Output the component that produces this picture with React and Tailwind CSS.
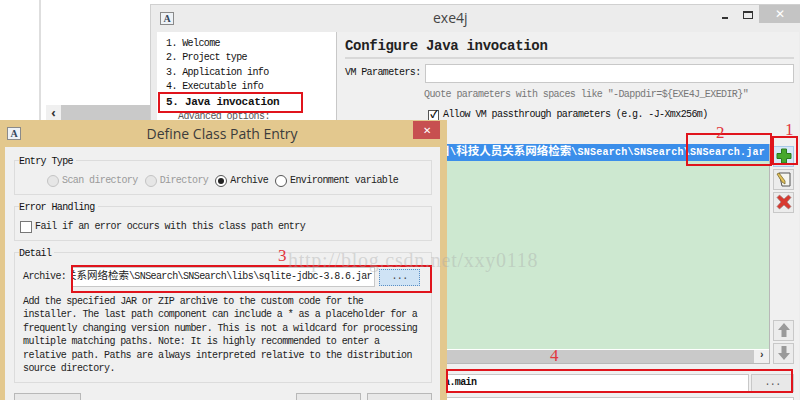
const mono = "font-['Liberation_Mono','Noto_Sans_CJK_SC',monospace]";
const ui = "font-['Open_Sans','Liberation_Sans',sans-serif]";

function AppIcon({ className }) {
  return (
    <div className={`flex items-center justify-center w-[14px] h-[13px] bg-[#eef2f6] border border-[#8a8a8a] text-[10px] leading-none font-bold text-[#34465c] font-['Liberation_Serif',serif] ${className}`}>
      A
    </div>
  );
}

function Radio({ label, checked, disabled }) {
  return (
    <div className={`flex items-center gap-[3px] ${disabled ? "text-[#9a9a9a]" : "text-[#222]"}`}>
      <div className={`flex items-center justify-center w-[12px] h-[12px] rounded-full border ${disabled ? "border-[#c4c4c4] bg-[#e6e6e6]" : "border-[#555] bg-white"}`}>
        {checked && <div className="w-[6px] h-[6px] rounded-full bg-[#222]" />}
      </div>
      <span>{label}</span>
    </div>
  );
}

function Group({ title, className, children }) {
  return (
    <div className={`relative border border-[#dcdcdc] ${className}`}>
      <span className="absolute left-[4px] top-[-5px] bg-[#f0f0f0] pr-[3px] leading-[12px] text-[#111]">{title}</span>
      {children}
    </div>
  );
}

function ToolButton({ children, active, className = "" }) {
  return (
    <div className={`flex items-center justify-center w-[21px] h-[21px] border ${active ? "border-[#a9c9e8] bg-[#d5e8f8]" : "border-[#c8c8c8] bg-[#ececec]"} ${className}`}>
      {children}
    </div>
  );
}

function PlusIcon() {
  return (
    <svg width="16" height="16" viewBox="0 0 16 16">
      <path d="M5.5 1h5v4.500H15v5h-4.500V15h-5v-4.500H1v-5h4.500z" fill="#46a82c" stroke="#2a7a1c" strokeWidth="1" />
    </svg>
  );
}

function EditIcon() {
  return (
    <svg width="17" height="17" viewBox="0 0 17 17">
      <path d="M4 2h11v13H7z" fill="#f6f6f0" stroke="#555" strokeWidth="1" />
      <path d="M2 3l2-1 6 8 0 3-3-2z" fill="#e3c25a" stroke="#7a6a30" strokeWidth="0.8" />
    </svg>
  );
}

function DeleteIcon() {
  return (
    <svg width="16" height="16" viewBox="0 0 16 16">
      <path d="M3.5 1L8 5 12.5 1 15 3.500 11 8l4 4.500-2.500 2.500L8 11l-4.500 4L1 12.500 5 8 1 3.500z" fill="#d8392f" stroke="#9a8080" strokeWidth="0.7" />
    </svg>
  );
}

function ArrowIcon({ down }) {
  return (
    <svg width="14" height="16" viewBox="0 0 14 16" className={down ? "rotate-180" : ""}>
      <path d="M7 1l6 7H9.500v7h-5V8H1z" fill="#9a9a9a" />
    </svg>
  );
}

function RedBox({ className }) {
  return <div className={`absolute border-2 border-[#e0141c] ${className}`} />;
}

function Mark({ className, children }) {
  return <span className={`absolute text-[#e2373c] text-[17px] leading-none font-['Liberation_Serif',serif] ${className}`}>{children}</span>;
}

function BackWindow() {
  const steps = ["1. Welcome", "2. Project type", "3. Application info", "4. Executable info"];
  return (
    <div className="absolute left-[150px] top-[4px] w-[650px] h-[396px] flex flex-col bg-[#ececec] border-l border-t border-[#d0d0d0]">
      <div className="relative flex items-center h-[27px] shrink-0">
        <AppIcon className="ml-[9px]" />
        <span className={`absolute left-[282px] top-[3px] text-[14px] leading-[20px] text-[#444] ${ui}`}>exe4j</span>
        <div className="ml-auto flex items-start self-start">
          <div className="w-[6px] h-[2px] bg-[#333] mt-[12px] mr-[15px]" />
          <div className="w-[10px] h-[8px] border border-[#333] border-t-2 mt-[6px] mr-[6px]" />
          <div className="flex items-center justify-center w-[41px] h-[18px] bg-[#c4c4c4] text-white text-[12px] leading-none">✕</div>
        </div>
      </div>
      <div className={`flex flex-1 bg-[#f0f0f0] ml-[6px] mr-[1px] text-[10px] leading-[14.4px] tracking-[-0.6px] text-[#111] ${mono}`}>
        <div className="w-[180px] h-[89px] shrink-0 bg-white pl-[9px] pt-[5px] border-r border-[#c8c8c8] overflow-hidden">
          {steps.map((s) => (
            <div key={s} className="whitespace-pre">{s}</div>
          ))}
          <div className="font-bold whitespace-pre text-[11px] tracking-[-0.3px]">5. Java invocation</div>
          <div className="pl-[12px] text-[#555] mt-[1px]">Advanced options:</div>
        </div>
        <div className="flex-1 flex flex-col pl-[8px] pr-[5px]">
          <div className="text-[14px] leading-[16px] font-bold tracking-[-0.3px] mt-[6px] pb-[3px] border-b-2 border-[#d8d8d8] text-[#222]">Configure Java invocation</div>
          <div className="flex items-center mt-[5px] h-[19px]">
            <span className="w-[80px] shrink-0 whitespace-nowrap">VM Parameters:</span>
            <div className="flex-1 h-[19px] bg-white border border-[#c8c8c8]" />
          </div>
          <div className="pl-[79px] mt-[5px] text-[#777] whitespace-nowrap">Quote parameters with spaces like "-Dappdir=${"{"}EXE4J_EXEDIR{"}"}"</div>
          <div className="flex items-center gap-[4px] pl-[83px] mt-[6px]">
            <div className="flex items-center justify-center w-[11px] h-[11px] bg-white border border-[#555] text-[10px] leading-none font-bold text-black">✓</div>
            <span className="whitespace-nowrap">Allow VM passthrough parameters (e.g. -J-Xmx256m)</span>
          </div>
          <div className="flex gap-[3px] mt-[21px] h-[220px] ml-[90px]">
            <div className="flex-1 min-w-0 flex flex-col border-r border-b border-[#b8b8b8] bg-[#cde8d0]">
              <div className="flex justify-end items-center h-[17px] overflow-hidden whitespace-nowrap bg-[#3b8eea] text-white font-bold pr-[4px] tracking-[0.25px]">
                <span className="shrink-0"><span className="text-[11.5px] tracking-normal">目</span>\<span className="text-[11.5px] tracking-normal">科技人员关系网络检索</span>\SNSearch\SNSearch\SNSearch.jar</span>
              </div>
              <div className="flex-1" />
              <div className="flex h-[14px] bg-[#c9c9c9] border-t border-white justify-end">
                <div className="flex items-center justify-center w-[15px] bg-[#f0f0f0] text-[10px] font-bold text-[#333]">›</div>
              </div>
            </div>
            <div className="flex flex-col w-[21px] gap-[2px] pt-[2px]">
              <ToolButton active><PlusIcon /></ToolButton>
              <ToolButton><EditIcon /></ToolButton>
              <ToolButton><DeleteIcon /></ToolButton>
              <div className="flex-1" />
              <ToolButton><ArrowIcon /></ToolButton>
              <ToolButton><ArrowIcon down /></ToolButton>
            </div>
          </div>
          <div className="flex gap-[2px] mt-[10px] h-[18px] ml-[90px]">
            <div className="flex-1 bg-white border border-[#c8c8c8] font-bold flex items-center pl-[8px]">a.main</div>
            <div className="flex items-center justify-center w-[43px] bg-[#e8e8e8] border border-[#c8c8c8] text-[#555]">...</div>
          </div>
          <div className="mt-[5px] ml-[90px] h-[10px] bg-white border border-[#c8c8c8]" />
        </div>
      </div>
    </div>
  );
}

function ClassPathDialog() {
  const description = [
    "Add the specified JAR or ZIP archive to the custom code for the",
    "installer. The last path component can include a * as a placeholder for a",
    "frequently changing version number. This is not a wildcard for processing",
    "multiple matching paths. Note: It is highly recommended to enter a",
    "relative path. Paths are always interpreted relative to the distribution",
    "source directory.",
  ];
  return (
    <div className="absolute left-0 top-[120px] w-[447px] h-[280px] flex flex-col bg-[#e3c88e]">
      <div className="relative flex items-center justify-center h-[27px] shrink-0 pr-[3px]">
        <AppIcon className="absolute left-[7px] top-[7px]" />
        <span className={`text-[14px] text-[#3c3c3c] ${ui}`}>Define Class Path Entry</span>
        <div className="absolute left-[413px] top-[1px] flex items-center justify-center w-[27px] h-[18px] bg-[#c75050] text-white text-[10px] leading-none">✕</div>
      </div>
      <div className={`flex-1 flex flex-col ml-[5px] mr-[7px] bg-[#f0f0f0] pl-[9px] pr-[8px] pt-[13px] text-[10px] leading-[13.400px] tracking-[-0.6px] text-[#222] ${mono}`}>
        <Group title="Entry Type" className="h-[35px] shrink-0">
          <div className="flex items-center gap-[7px] pl-[32px] pt-[13px]">
            <Radio label="Scan directory" disabled />
            <Radio label="Directory" disabled />
            <Radio label="Archive" checked />
            <Radio label="Environment variable" />
          </div>
        </Group>
        <Group title="Error Handling" className="h-[35px] mt-[11px] shrink-0">
          <div className="flex items-center gap-[3px] pl-[5px] pt-[13px]">
            <div className="w-[12px] h-[12px] bg-white border border-[#777]" />
            <span>Fail if an error occurs with this class path entry</span>
          </div>
        </Group>
        <Group title="Detail" className="h-[131px] mt-[11px] shrink-0">
          <div className="flex items-center pl-[8px] pt-[14px]">
            <span className="w-[49px] shrink-0">Archive:</span>
            <div className="flex justify-end items-center w-[303px] h-[20px] bg-white border border-[#c8c8c8] overflow-hidden whitespace-nowrap pr-[2px] text-[#222]">
              <span className="shrink-0"><span className="text-[10.5px] tracking-normal">关系网络检索</span>\SNSearch\SNSearch\libs\sqlite-jdbc-3.8.6.jar</span>
            </div>
            <div className="flex items-center justify-center w-[41px] h-[17px] ml-[4px] bg-[#cfe3f5] border border-[#5a8fc4] border-dotted text-[#444]">...</div>
          </div>
          <div className="pl-[8px] pt-[8px]">
            {description.map((line) => (
              <div key={line} className="whitespace-nowrap">{line}</div>
            ))}
          </div>
        </Group>
        <div className="flex mt-[10px]">
          <div className="w-[67px] h-[20px] bg-[#e8e8e8] border border-[#b8b8b8]" />
          <div className="ml-auto w-[65px] h-[20px] bg-[#e8e8e8] border border-[#b8b8b8]" />
          <div className="ml-[6px] w-[65px] h-[20px] bg-[#e8e8e8] border border-[#b8b8b8]" />
        </div>
      </div>
    </div>
  );
}

export default function App() {
  return (
    <div className="relative w-[807px] h-[400px] overflow-hidden bg-white">
      <div className="absolute left-[39px] top-0 w-[111px] h-[120px] border-l-2 border-[#dedede] pl-[5px] flex flex-col justify-end">
        <div className="flex h-[15px] bg-[#c9c9c9]">
          <div className="flex items-center justify-center w-[15px] bg-[#f0f0f0] text-[12px] leading-none font-bold text-[#333]">‹</div>
        </div>
      </div>
      <BackWindow />
      <ClassPathDialog />
      <RedBox className="left-[158px] top-[92px] w-[145px] h-[21px]" />
      <RedBox className="left-[686px] top-[133px] w-[86px] h-[33px]" />
      <RedBox className="left-[772px] top-[136px] w-[26px] h-[29px]" />
      <RedBox className="left-[71px] top-[265px] w-[361px] h-[28px]" />
      <RedBox className="left-[446px] top-[369px] w-[347px] h-[24px]" />
      <Mark className="left-[785px] top-[121px]">1</Mark>
      <Mark className="left-[716px] top-[124px]">2</Mark>
      <Mark className="left-[278px] top-[247px]">3</Mark>
      <Mark className="left-[550px] top-[347px]">4</Mark>
      <span className="absolute left-[288px] top-[248px] text-[20px] leading-[24px] tracking-[0.75px] text-[#a8a8a8]/40 whitespace-nowrap font-['Liberation_Serif',serif]">http://blog.csdn.net/xxy0118</span>
    </div>
  );
}
